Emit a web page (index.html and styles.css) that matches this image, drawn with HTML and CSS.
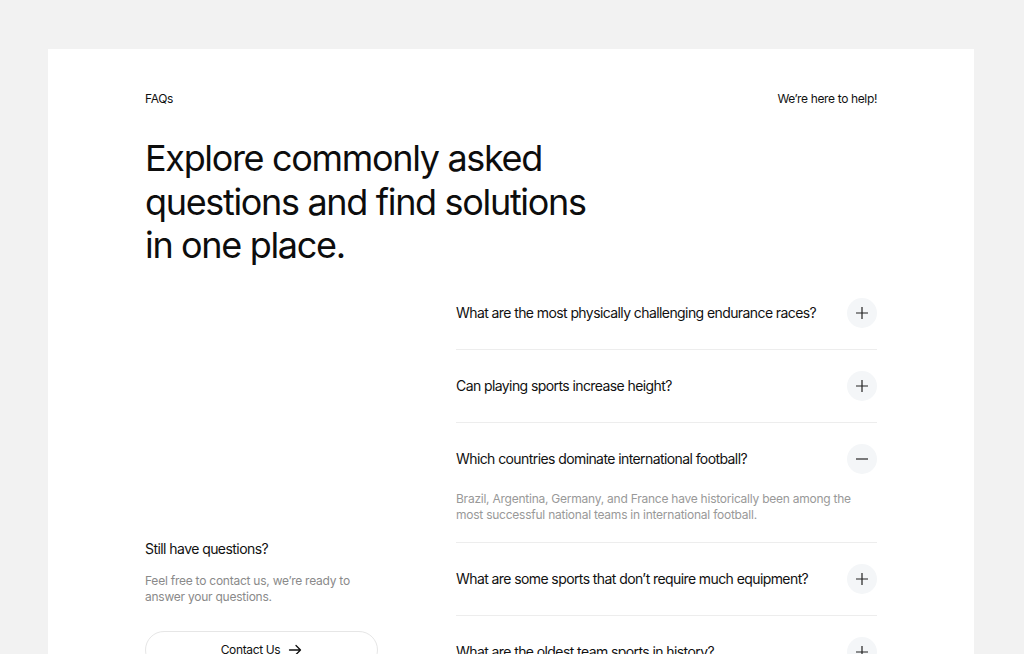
FILE: index.html
```html
<!DOCTYPE html>
<html lang="en">
<head>
<meta charset="utf-8">
<title>FAQs</title>
<link rel="stylesheet" href="styles.css">
</head>
<body>
<main class="card">
  <div class="topbar">
    <span class="eyebrow">FAQs</span>
    <span class="eyebrow">We’re here to help!</span>
  </div>
  <h1 class="title">Explore commonly asked questions and find solutions in one place.</h1>
  <div class="columns">
    <aside class="contact">
      <h2 class="contact-title">Still have questions?</h2>
      <p class="contact-text">Feel free to contact us, we’re ready to answer your questions.</p>
      <a class="contact-btn" href="#">Contact Us
        <svg width="14" height="14" viewBox="0 0 14 14" fill="none" stroke="#111" stroke-width="1.3" stroke-linecap="round" stroke-linejoin="round"><path d="M1.5 7h11M8 2.5 12.5 7 8 11.5"/></svg>
      </a>
    </aside>
    <section class="faq">
      <div class="item">
        <div class="q-row"><span class="q">What are the most physically challenging endurance races?</span><span class="toggle"><svg width="14" height="14" viewBox="0 0 14 14" stroke="#222" stroke-width="1.2"><path d="M7 1v12M1 7h12"/></svg></span></div>
      </div>
      <div class="item">
        <div class="q-row"><span class="q">Can playing sports increase height?</span><span class="toggle"><svg width="14" height="14" viewBox="0 0 14 14" stroke="#222" stroke-width="1.2"><path d="M7 1v12M1 7h12"/></svg></span></div>
      </div>
      <div class="item open">
        <div class="q-row"><span class="q">Which countries dominate international football?</span><span class="toggle"><svg width="14" height="14" viewBox="0 0 14 14" stroke="#444" stroke-width="1.4"><path d="M1 7h12"/></svg></span></div>
        <p class="answer">Brazil, Argentina, Germany, and France have historically been among the most successful national teams in international football.</p>
      </div>
      <div class="item">
        <div class="q-row"><span class="q">What are some sports that don’t require much equipment?</span><span class="toggle"><svg width="14" height="14" viewBox="0 0 14 14" stroke="#222" stroke-width="1.2"><path d="M7 1v12M1 7h12"/></svg></span></div>
      </div>
      <div class="item">
        <div class="q-row"><span class="q">What are the oldest team sports in history?</span><span class="toggle"><svg width="14" height="14" viewBox="0 0 14 14" stroke="#222" stroke-width="1.2"><path d="M7 1v12M1 7h12"/></svg></span></div>
      </div>
    </section>
  </div>
</main>
</body>
</html>
```
FILE: styles.css
```css
* { box-sizing: border-box; }
html, body { margin: 0; padding: 0; }
body {
  background: #f2f2f2;
  font-family: Inter, "Liberation Sans", sans-serif;
  color: #111;
  overflow: hidden;
}
.card {
  background: #fff;
  margin: 49px 50px 0 48px;
  padding: 42px 97px 60px;
  min-height: 700px;
}
.topbar {
  display: flex;
  justify-content: space-between;
  align-items: center;
}
.eyebrow {
  font-size: 12px;
  letter-spacing: -0.03em;
  line-height: 16px;
  color: #111;
}
.title {
  margin: 30px 0 0;
  font-size: 36px;
  line-height: 43.5px;
  font-weight: 400;
  letter-spacing: -0.037em;
  max-width: 460px;
  color: #0d0d0d;
}
.columns {
  display: grid;
  grid-template-columns: 233px 421px;
  justify-content: space-between;
  margin-top: 9px;
}
.contact {
  padding-top: 262px;
  display: flex;
  flex-direction: column;
}
.contact-title {
  margin: 0;
  font-size: 14px;
  line-height: 20px;
  font-weight: 400;
  letter-spacing: -0.04em;
  color: #111;
}
.contact-text {
  margin: 14px 0 0;
  font-size: 12px;
  line-height: 16px;
  color: #8a8a8a;
  letter-spacing: -0.02em;
  max-width: 220px;
}
.contact-btn {
  margin-top: 26px;
  height: 38px;
  border: 1px solid #e6e6e6;
  border-radius: 19px;
  display: flex;
  align-items: center;
  justify-content: center;
  gap: 8px;
  font-size: 12px;
  color: #111;
  text-decoration: none;
  letter-spacing: -0.03em;
}
.faq { display: flex; flex-direction: column; }
.item {
  border-bottom: 1px solid #ededed;
  padding: 21px 0;
}
.item.open { padding-bottom: 19px; }
.q-row {
  display: flex;
  align-items: center;
  justify-content: space-between;
  height: 30px;
}
.q {
  font-size: 14px;
  line-height: 20px;
  letter-spacing: -0.042em;
  color: #111;
}
.toggle {
  width: 30px;
  height: 30px;
  border-radius: 50%;
  background: #f4f6f8;
  display: flex;
  align-items: center;
  justify-content: center;
  flex: none;
}
.answer {
  margin: 17px 0 0;
  font-size: 12px;
  line-height: 16px;
  color: #999;
  letter-spacing: -0.02em;
  max-width: 405px;
}
```
